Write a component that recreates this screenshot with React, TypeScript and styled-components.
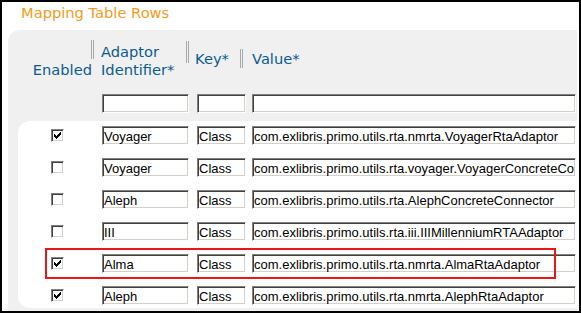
import React from 'react';
import styled, { createGlobalStyle } from 'styled-components';

const Global = createGlobalStyle`
  html, body { margin: 0; padding: 0; background: #fff; }
  #root { width: 581px; height: 313px; }
`;

const Frame = styled.div`
  box-sizing: border-box;
  width: 581px;
  height: 313px;
  border: 2px solid #000;
  background: #fff;
  overflow: hidden;
  display: flex;
  flex-direction: column;
  padding-top: 2px;
`;

const Title = styled.h2`
  margin: 0 0 8px 19px;
  font: normal 14.67px/18px "DejaVu Sans", Verdana, sans-serif;
  color: #f39b22;
`;

const Panel = styled.section`
  flex: 1;
  margin: 0 2px 0 6px;
  background: #f0f0f0;
  border-top-left-radius: 12px;
  padding-top: 10px;
  display: flex;
  flex-direction: column;
`;

const HeadRow = styled.div`
  display: grid;
  grid-template-columns: 83px 95px 54px 1fr;
  height: 38px;
  font: normal 14.67px/17.5px "DejaVu Sans", Verdana, sans-serif;
  color: #0a5b8e;
`;

const HeadCell = styled.div<{ $end?: boolean }>`
  display: flex;
  align-items: flex-start;
  justify-content: ${p => (p.$end ? 'flex-end' : 'flex-start')};
`;

const Sep = styled.span<{ $top: number; $h: number }>`
  box-sizing: border-box;
  flex: none;
  width: 3px;
  height: ${p => p.$h}px;
  margin-top: ${p => p.$top}px;
  border-left: 1px solid #a8a8a8;
  border-right: 1px solid #a8a8a8;
`;

const Label = styled.span<{ $top?: number; $left?: number; $bottom?: boolean }>`
  white-space: nowrap;
  margin-left: ${p => p.$left ?? 0}px;
  margin-top: ${p => p.$top ?? 0}px;
  align-self: ${p => (p.$bottom ? 'flex-end' : 'flex-start')};
  margin-right: ${p => (p.$bottom ? -1 : 0)}px;
`;

const GridRow = styled.div`
  position: relative;
  display: grid;
  grid-template-columns: 84px 95px 55px 1fr;
  align-items: center;
  height: 19px;
`;

const FilterRow = styled(GridRow)`
  margin-top: 16px;
  padding-left: 10px;
`;

const Rows = styled.div`
  margin: 8px 0 0 10px;
  background: #fff;
  border-radius: 12px 0 0 12px;
  padding: 5px 0 3px 0;
  display: flex;
  flex-direction: column;
  gap: 13px;
`;

const Field = styled.input<{ $w: number }>`
  box-sizing: border-box;
  width: ${p => p.$w}px;
  height: 19px;
  margin: 0;
  padding: 2px 1px 0 1px;
  border: 1px solid;
  border-color: #808080 #fff #fff #808080;
  box-shadow: inset 1px 1px 0 #404040, inset -1px -1px 0 #d4d0c8;
  border-radius: 0;
  background: #fff;
  color: #000;
  font: 13px "Liberation Sans", Arial, sans-serif;
  outline: none;
`;

const Box = styled.span`
  box-sizing: border-box;
  justify-self: start;
  margin-left: 33px;
  width: 13px;
  height: 13px;
  border: 1px solid;
  border-color: #808080 #fff #fff #808080;
  box-shadow: inset 1px 1px 0 #404040, inset -1px -1px 0 #d4d0c8;
  background: #fff;
  display: flex;
  align-items: center;
  justify-content: center;
`;

const Highlight = styled.span`
  position: absolute;
  left: 27px;
  top: -6px;
  width: 511px;
  height: 31px;
  box-sizing: border-box;
  border: 2px solid #ee1515;
  pointer-events: none;
`;

const Tick = () => (
  <svg width="7" height="7" viewBox="0 0 7 7" shapeRendering="crispEdges">
    <path
      fill="#000"
      d="M6 0h1v3h-1v1h-1v1h-1v1h-1v1h-1v-1h-1v-1h-1v-3h1v1h1v1h1v-1h1v-1h1z"
    />
  </svg>
);

type RowData = { on: boolean; id: string; key: string; value: string; mark?: boolean };

const rows: RowData[] = [
  { on: true, id: 'Voyager', key: 'Class', value: 'com.exlibris.primo.utils.rta.nmrta.VoyagerRtaAdaptor' },
  { on: false, id: 'Voyager', key: 'Class', value: 'com.exlibris.primo.utils.rta.voyager.VoyagerConcreteConnector' },
  { on: false, id: 'Aleph', key: 'Class', value: 'com.exlibris.primo.utils.rta.AlephConcreteConnector' },
  { on: false, id: 'III', key: 'Class', value: 'com.exlibris.primo.utils.rta.iii.IIIMillenniumRTAAdaptor' },
  { on: true, id: 'Alma', key: 'Class', value: 'com.exlibris.primo.utils.rta.nmrta.AlmaRtaAdaptor', mark: true },
  { on: true, id: 'Aleph', key: 'Class', value: 'com.exlibris.primo.utils.rta.nmrta.AlephRtaAdaptor' },
];

export default function App() {
  return (
    <>
      <Global />
      <Frame>
        <Title>Mapping Table Rows</Title>
        <Panel>
          <HeadRow>
            <HeadCell $end>
              <Label $bottom>Enabled</Label>
            </HeadCell>
            <HeadCell>
              <Sep $top={0} $h={19} />
              <Label $left={7} $top={3}>
                Adaptor
                <br />
                Identifier*
              </Label>
            </HeadCell>
            <HeadCell>
              <Sep $top={1} $h={22} />
              <Label $left={6} $top={10}>Key*</Label>
            </HeadCell>
            <HeadCell>
              <Sep $top={9} $h={19} />
              <Label $left={9} $top={10}>Value*</Label>
            </HeadCell>
          </HeadRow>
          <FilterRow>
            <span />
            <Field $w={87} readOnly value="" />
            <Field $w={49} readOnly value="" />
            <Field $w={324} readOnly value="" />
          </FilterRow>
          <Rows>
            {rows.map((r, i) => (
              <GridRow key={i}>
                <Box>{r.on && <Tick />}</Box>
                <Field $w={87} readOnly value={r.id} />
                <Field $w={49} readOnly value={r.key} />
                <Field $w={324} readOnly value={r.value} />
                {r.mark && <Highlight />}
              </GridRow>
            ))}
          </Rows>
        </Panel>
      </Frame>
    </>
  );
}
